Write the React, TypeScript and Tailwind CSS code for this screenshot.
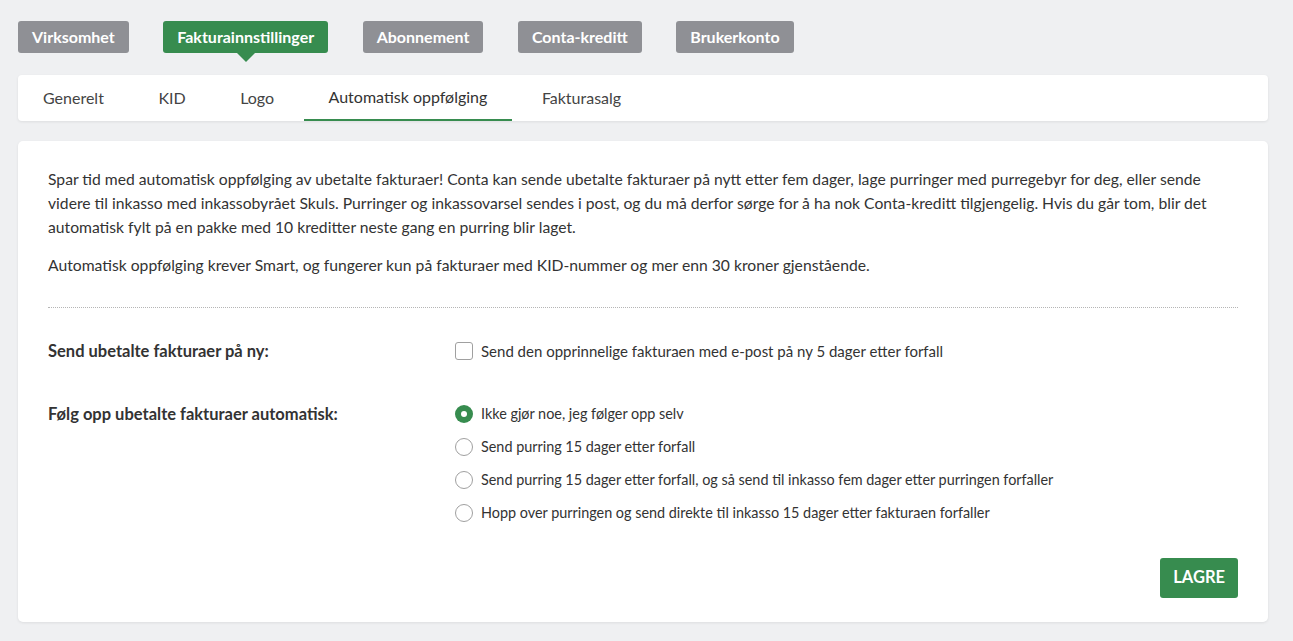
import React, { useState } from 'react';

const topTabs = ['Virksomhet', 'Fakturainnstillinger', 'Abonnement', 'Conta-kreditt', 'Brukerkonto'];
const subTabs = ['Generelt', 'KID', 'Logo', 'Automatisk oppfølging', 'Fakturasalg'];
const options = [
  'Ikke gjør noe, jeg følger opp selv',
  'Send purring 15 dager etter forfall',
  'Send purring 15 dager etter forfall, og så send til inkasso fem dager etter purringen forfaller',
  'Hopp over purringen og send direkte til inkasso 15 dager etter fakturaen forfaller',
];

export default function App() {
  const [resend, setResend] = useState(false);
  const [choice, setChoice] = useState(0);

  return (
    <div className="min-h-screen bg-[#eff0f2] pl-[18px] pr-[25px] pt-[21px] pb-5 text-[#333] font-['Lato','Open_Sans',sans-serif]">
      {/* Main sections */}
      <div className="flex gap-[34.5px]">
        {topTabs.map((t, i) => (
          <div key={t} className="relative">
            <button
              className={`h-8 px-[14px] rounded-[3px] text-[16px] font-bold text-white ${
                i === 1 ? 'bg-[#378c4f]' : 'bg-[#8f9095]'
              }`}
            >
              {t}
            </button>
            {i === 1 && (
              <span className="absolute left-1/2 -translate-x-1/2 top-full w-0 h-0 border-l-[9px] border-r-[9px] border-t-[9px] border-l-transparent border-r-transparent border-t-[#378c4f]"></span>
            )}
          </div>
        ))}
      </div>

      {/* Sub tabs */}
      <div className="mt-[22px] bg-white rounded-[4px] shadow-[0_1px_3px_rgba(0,0,0,0.08)] flex gap-[4.5px] h-[46px]">
        {subTabs.map((t, i) => (
          <div
            key={t}
            className={`px-[25px] flex items-center text-[16px] ${
              i === 3 ? 'border-b-2 border-[#378c4f] text-[#333]' : 'text-[#444]'
            }`}
          >
            {t}
          </div>
        ))}
      </div>

      {/* Content */}
      <div className="mt-[20px] bg-white rounded-[5px] shadow-[0_1px_3px_rgba(0,0,0,0.08)] px-[30px] pt-[26px] pb-[24px]">
        <p className="text-[15.7px] leading-6">
          Spar tid med automatisk oppfølging av ubetalte fakturaer! Conta kan sende ubetalte fakturaer på nytt etter fem dager, lage purringer med purregebyr for deg, eller sende videre til inkasso med inkassobyrået Skuls. Purringer og inkassovarsel sendes i post, og du må derfor sørge for å ha nok Conta-kreditt tilgjengelig. Hvis du går tom, blir det automatisk fylt på en pakke med 10 kreditter neste gang en purring blir laget.
        </p>
        <p className="text-[15.7px] leading-6 mt-[14px]">
          Automatisk oppfølging krever Smart, og fungerer kun på fakturaer med KID-nummer og mer enn 30 kroner gjenstående.
        </p>

        <div className="mt-[30px] border-t border-dotted border-[#b5b5b5]"></div>

        <div className="mt-[31px] flex items-center">
          <div className="w-[407px] text-[16.5px] font-bold">Send ubetalte fakturaer på ny:</div>
          <label className="flex items-center gap-2 text-[15px] cursor-pointer" onClick={() => setResend(!resend)}>
            <span className="w-[18px] h-[18px] rounded-[3px] border border-[#a0a0a0] bg-white"></span>
            Send den opprinnelige fakturaen med e-post på ny 5 dager etter forfall
          </label>
        </div>

        <div className="mt-[40px] flex">
          <div className="w-[407px] text-[16.5px] font-bold leading-[20px]">Følg opp ubetalte fakturaer automatisk:</div>
          <div className="flex flex-col gap-[13px]">
            {options.map((o, i) => (
              <label key={o} className="flex items-center gap-2 text-[14.4px] leading-[20px] cursor-pointer" onClick={() => setChoice(i)}>
                {choice === i ? (
                  <span className="w-[18px] h-[18px] rounded-full bg-[#378c4f] flex items-center justify-center">
                    <span className="w-[6px] h-[6px] rounded-full bg-white"></span>
                  </span>
                ) : (
                  <span className="w-[18px] h-[18px] rounded-full border border-[#a0a0a0] bg-white"></span>
                )}
                {o}
              </label>
            ))}
          </div>
        </div>

        <div className="mt-[35px] flex justify-end">
          <button className="h-[40px] px-[13px] rounded-[3px] bg-[#378c4f] text-white text-[16.5px] font-bold">LAGRE</button>
        </div>
      </div>
    </div>
  );
}
